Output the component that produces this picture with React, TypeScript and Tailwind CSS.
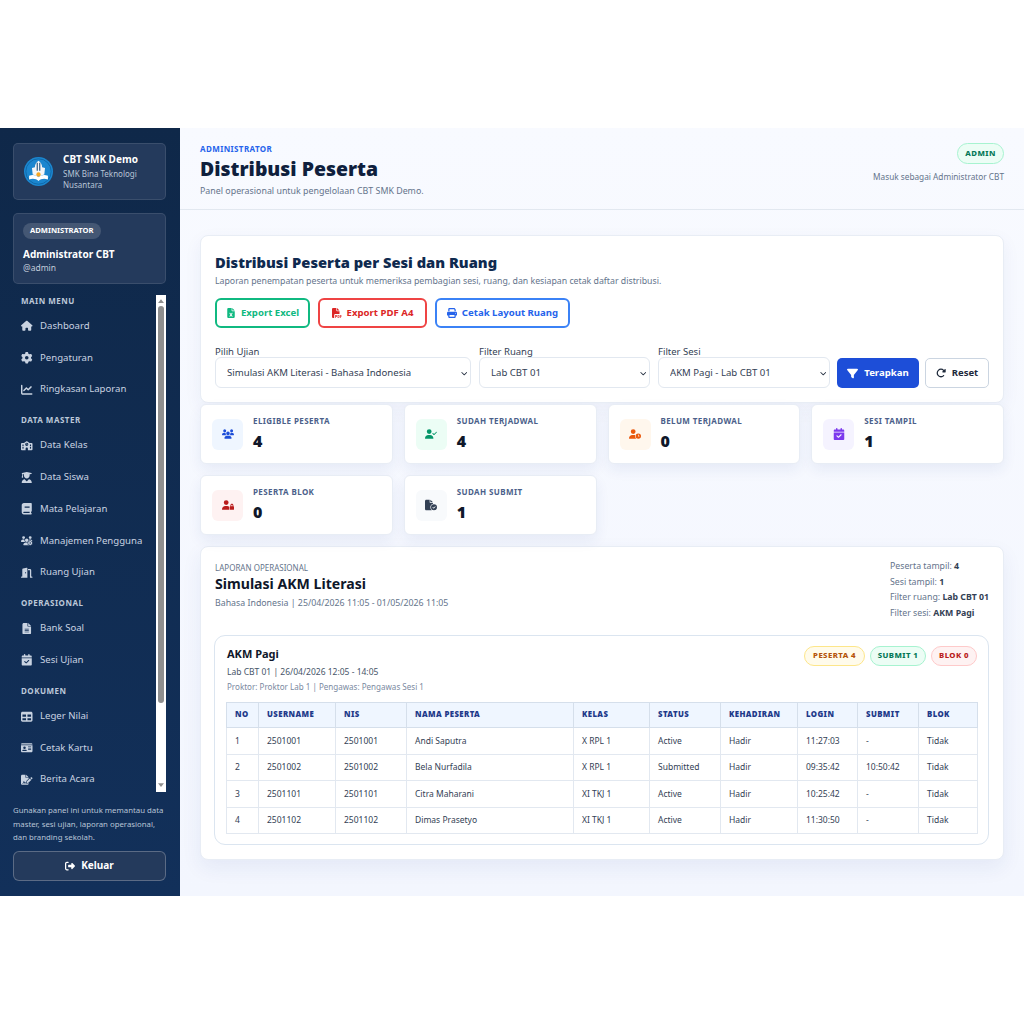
import type { ReactNode } from "react";
import {
  FaBook,
  FaCalendarCheck,
  FaChartLine,
  FaChevronDown,
  FaDoorOpen,
  FaFileCircleCheck,
  FaFileExcel,
  FaFileLines,
  FaFilePdf,
  FaFileSignature,
  FaFilter,
  FaGear,
  FaHouse,
  FaIdCard,
  FaPrint,
  FaRightFromBracket,
  FaRotateRight,
  FaSchool,
  FaTable,
  FaUserCheck,
  FaUserClock,
  FaUserGraduate,
  FaUserLock,
  FaUsers,
  FaUsersGear,
} from "react-icons/fa6";

const navGroups = [
  {
    label: "MAIN MENU",
    items: [
      { name: "Dashboard", icon: <FaHouse /> },
      { name: "Pengaturan", icon: <FaGear /> },
      { name: "Ringkasan Laporan", icon: <FaChartLine /> },
    ],
  },
  {
    label: "DATA MASTER",
    items: [
      { name: "Data Kelas", icon: <FaSchool /> },
      { name: "Data Siswa", icon: <FaUserGraduate /> },
      { name: "Mata Pelajaran", icon: <FaBook /> },
      { name: "Manajemen Pengguna", icon: <FaUsersGear /> },
      { name: "Ruang Ujian", icon: <FaDoorOpen /> },
    ],
  },
  {
    label: "OPERASIONAL",
    items: [
      { name: "Bank Soal", icon: <FaFileLines /> },
      { name: "Sesi Ujian", icon: <FaCalendarCheck /> },
    ],
  },
  {
    label: "DOKUMEN",
    items: [
      { name: "Leger Nilai", icon: <FaTable /> },
      { name: "Cetak Kartu", icon: <FaIdCard /> },
      { name: "Berita Acara", icon: <FaFileSignature /> },
    ],
  },
];

const rows = [
  ["1", "2501001", "2501001", "Andi Saputra", "X RPL 1", "Active", "Hadir", "11:27:03", "-", "Tidak"],
  ["2", "2501002", "2501002", "Bela Nurfadila", "X RPL 1", "Submitted", "Hadir", "09:35:42", "10:50:42", "Tidak"],
  ["3", "2501101", "2501101", "Citra Maharani", "XI TKJ 1", "Active", "Hadir", "10:25:42", "-", "Tidak"],
  ["4", "2501102", "2501102", "Dimas Prasetyo", "XI TKJ 1", "Active", "Hadir", "11:30:50", "-", "Tidak"],
];

const columns = [
  { name: "NO", width: "w-[32px]" },
  { name: "USERNAME", width: "w-[77px]" },
  { name: "NIS", width: "w-[71px]" },
  { name: "NAMA PESERTA", width: "w-[167px]" },
  { name: "KELAS", width: "w-[76px]" },
  { name: "STATUS", width: "w-[71px]" },
  { name: "KEHADIRAN", width: "w-[77px]" },
  { name: "LOGIN", width: "w-[60px]" },
  { name: "SUBMIT", width: "w-[61px]" },
  { name: "BLOK", width: "w-[59px]" },
];

const Logo = () => (
  <svg viewBox="0 0 40 40" className="w-[29px] h-[29px] shrink-0">
    <circle cx="20" cy="20" r="20" fill="#1b86cf" />
    <circle cx="20" cy="20" r="17.5" fill="none" stroke="#0d5f9e" strokeWidth="1" />
    <path d="M20 5c-3 2-5 5-5 9l-4 1 1 9 8 3 8-3 1-9-4-1c0-4-2-7-5-9z" fill="#f4f6f8" />
    <path d="M17.500 8h1.500v11h-1.500zM21 8h1.500v11h-1.500z" fill="#1b4f7a" />
    <path d="M7 26c5-2 10-1 13 2 3-3 8-4 13-2v5c-5-2-10-1-13 2-3-3-8-4-13-2z" fill="#ffffff" />
    <circle cx="20" cy="24" r="3" fill="#f5a623" />
  </svg>
);

const ActionButton = ({ icon, label, tone, width }: { icon: ReactNode; label: string; tone: string; width: string }) => (
  <button className={`h-[30px] flex items-center justify-center gap-[5px] rounded-[6px] border-2 bg-white text-[9.600px] font-bold ${width} ${tone}`}>
    <span className="text-[10px]">{icon}</span>
    {label}
  </button>
);

const Field = ({ label, value, width }: { label: string; value: string; width: string }) => (
  <label className={`flex flex-col shrink-0 ${width}`}>
    <span className="-mb-[1px] text-[9.500px] leading-[13px] text-[#334155]">{label}</span>
    <div className="relative">
      <select className="appearance-none h-[31px] w-full rounded-[6px] border border-[#e2e8f0] bg-white pl-[11px] pt-[1px] text-[9.600px] text-[#334155]">
        <option>{value}</option>
      </select>
      <FaChevronDown className="absolute right-[4px] top-[13px] text-[6.500px] text-[#1e293b]" />
    </div>
  </label>
);

const Stat = ({ icon, tone, label, value }: { icon: ReactNode; tone: string; label: string; value: string }) => (
  <div className="h-[60px] flex items-center gap-[10px] pl-[11px] rounded-[6px] border border-[#e8edf5] bg-white shadow-[0_6px_14px_rgba(30,58,138,0.07)]">
    <div className={`w-[31px] h-[31px] rounded-[6px] flex items-center justify-center text-[12px] ${tone}`}>{icon}</div>
    <div className="flex flex-col -mt-[1px]">
      <span className="text-[8px] leading-[11px] font-bold tracking-[0.4px] text-[#4b5f8a]">{label}</span>
      <span className="text-[16px] leading-[22px] mt-[4px] font-black text-[#0f172a]">{value}</span>
    </div>
  </div>
);

const Pill = ({ label, tone, width }: { label: string; tone: string; width: string }) => (
  <span className={`h-[20px] flex items-center justify-center rounded-full border text-[7.800px] font-extrabold tracking-[0.4px] ${width} ${tone}`}>{label}</span>
);

export default function App() {
  return (
    <div className="min-h-screen flex items-center bg-white font-['Noto_Sans',sans-serif]">
      <div className="w-[1024px] h-[768px] flex overflow-hidden">
        <aside className="w-[180px] shrink-0 flex flex-col pt-[15px] pl-[13px] pr-[14px] bg-gradient-to-b from-[#0f2849] to-[#12305a]">
          <div className="h-[57px] shrink-0 flex items-center gap-[10px] pl-[10px] rounded-[5px] border border-white/10 bg-[#243a5c]">
            <Logo />
            <div className="flex flex-col -mt-[2px]">
              <span className="text-[10px] leading-[14px] font-bold text-white">CBT SMK Demo</span>
              <span className="text-[8px] leading-[11px] mt-[2px] text-[#b8c4d6]">
                SMK Bina Teknologi
                <br />
                Nusantara
              </span>
            </div>
          </div>

          <div className="h-[71px] shrink-0 mt-[13px] flex flex-col items-start pl-[9px] pt-[9px] rounded-[5px] border border-white/10 bg-[#243a5c]">
            <span className="h-[16px] px-[7px] flex items-center rounded-full bg-white/15 text-[7.600px] font-bold text-white">ADMINISTRATOR</span>
            <span className="mt-[8px] text-[10px] leading-[14px] font-bold text-white">Administrator CBT</span>
            <span className="text-[8.500px] leading-[13px] text-[#c3cddb]">@admin</span>
          </div>

          <nav className="h-[497px] shrink-0 mt-[11px] flex overflow-hidden">
            <div className="flex-1 pl-[8px]">
              {navGroups.map((group, i) => (
                <div key={group.label} className={i === 0 ? "" : "mt-[9px]"}>
                  <div className="h-[12px] mb-[3.400px] flex items-center text-[8px] font-bold tracking-[0.5px] text-[#bcc8d9]">{group.label}</div>
                  {group.items.map((item) => (
                    <div key={item.name} className="h-[31.700px] flex items-center text-[#c9d3e1]">
                      <span className="w-[19px] shrink-0 flex text-[11.500px]">{item.icon}</span>
                      <span className="text-[9.600px] whitespace-nowrap">{item.name}</span>
                    </div>
                  ))}
                </div>
              ))}
            </div>
            <div className="w-[10px] shrink-0 flex flex-col items-center bg-white">
              <svg viewBox="0 0 8 5" className="w-[6px] h-[4px] mt-[4px] fill-[#8f8f8f]">
                <polygon points="4,0 8,5 0,5" />
              </svg>
              <div className="w-[6px] h-[397px] mt-[3px] rounded-full bg-[#8f8f8f]" />
              <svg viewBox="0 0 8 5" className="w-[6px] h-[4px] mt-[80px] fill-[#8f8f8f]">
                <polygon points="0,0 8,0 4,5" />
              </svg>
            </div>
          </nav>

          <p className="mt-[12px] text-[7.800px] leading-[13.500px] text-[#b8c4d6]">
            Gunakan panel ini untuk memantau data master, sesi ujian, laporan operasional, dan branding sekolah.
          </p>
          <button className="h-[30px] mt-[6px] shrink-0 flex items-center justify-center gap-[6px] rounded-[6px] border border-white/25 bg-[#243a5c] text-[10px] font-bold text-white">
            <FaRightFromBracket className="text-[10px]" />
            Keluar
          </button>
        </aside>

        <main className="flex-1 min-w-0 flex flex-col bg-gradient-to-b from-[#f8faff] to-[#f3f6fe] text-[#0f172a]">
          <header className="h-[82px] shrink-0 flex justify-between px-[20px] pt-[15px] border-b border-[#e2e8f0]">
            <div className="flex flex-col">
              <span className="text-[8px] leading-[11px] font-bold tracking-[0.4px] text-[#2563eb]">ADMINISTRATOR</span>
              <h1 className="mt-[2px] text-[19.400px] leading-[26px] font-black text-[#0f1f3d]">Distribusi Peserta</h1>
              <span className="mt-[3px] text-[8.850px] leading-[13px] text-[#64748b]">Panel operasional untuk pengelolaan CBT SMK Demo.</span>
            </div>
            <div className="flex flex-col items-end">
              <span className="h-[21px] px-[7px] flex items-center rounded-full border border-[#a7f3d0] bg-[#ecfdf5] text-[7.800px] font-extrabold tracking-[0.5px] text-[#047857]">ADMIN</span>
              <span className="mt-[7px] text-[8.250px] leading-[12px] text-[#64748b]">Masuk sebagai Administrator CBT</span>
            </div>
          </header>

          <div className="flex-1 px-[20px] pt-[25px]">
            <section className="h-[168px] px-[14px] pt-[15px] rounded-[8px] border border-[#e8edf5] bg-white shadow-[0_6px_18px_rgba(30,58,138,0.06)]">
              <h2 className="text-[14.700px] leading-[22px] font-black text-[#0f2a4f]">Distribusi Peserta per Sesi dan Ruang</h2>
              <p className="mt-[2px] text-[8.750px] leading-[13px] text-[#64748b]">
                Laporan penempatan peserta untuk memeriksa pembagian sesi, ruang, dan kesiapan cetak daftar distribusi.
              </p>
              <div className="flex gap-[8px] mt-[10px]">
                <ActionButton icon={<FaFileExcel />} label="Export Excel" width="w-[95px]" tone="border-[#10b981] text-[#10b981]" />
                <ActionButton icon={<FaFilePdf />} label="Export PDF A4" width="w-[109px]" tone="border-[#ef4444] text-[#dc2626]" />
                <ActionButton icon={<FaPrint />} label="Cetak Layout Ruang" width="w-[135px]" tone="border-[#3b82f6] text-[#2563eb]" />
              </div>
              <div className="flex items-end mt-[17px]">
                <Field label="Pilih Ujian" value="Simulasi AKM Literasi - Bahasa Indonesia" width="w-[256px]" />
                <div className="w-[8px]" />
                <Field label="Filter Ruang" value="Lab CBT 01" width="w-[171px]" />
                <div className="w-[8px]" />
                <Field label="Filter Sesi" value="AKM Pagi - Lab CBT 01" width="w-[172px]" />
                <button className="ml-[7px] h-[30px] w-[82px] flex items-center justify-center gap-[6px] rounded-[5px] bg-[#1d4ed8] text-[9.600px] font-bold text-white">
                  <FaFilter className="text-[11px]" />
                  Terapkan
                </button>
                <button className="ml-[6px] h-[30px] w-[64px] flex items-center justify-center gap-[6px] rounded-[5px] border border-[#cbd5e1] bg-white text-[9.500px] font-bold text-[#1e293b]">
                  <FaRotateRight className="text-[10px]" />
                  Reset
                </button>
              </div>
            </section>

            <div className="grid grid-cols-4 gap-x-[11px] gap-y-[11px] mt-[1px]">
              <Stat icon={<FaUsers />} tone="bg-[#eff6ff] text-[#1d4ed8]" label="ELIGIBLE PESERTA" value="4" />
              <Stat icon={<FaUserCheck />} tone="bg-[#ecfdf5] text-[#059669]" label="SUDAH TERJADWAL" value="4" />
              <Stat icon={<FaUserClock />} tone="bg-[#fff7ed] text-[#ea580c]" label="BELUM TERJADWAL" value="0" />
              <Stat icon={<FaCalendarCheck />} tone="bg-[#f5f3ff] text-[#7c3aed]" label="SESI TAMPIL" value="1" />
              <Stat icon={<FaUserLock />} tone="bg-[#fef2f2] text-[#b91c1c]" label="PESERTA BLOK" value="0" />
              <Stat icon={<FaFileCircleCheck />} tone="bg-[#f8fafc] text-[#334155]" label="SUDAH SUBMIT" value="1" />
            </div>

            <section className="h-[314px] mt-[11px] pl-[13px] pr-[14px] pt-[15px] rounded-[8px] border border-[#e8edf5] bg-white shadow-[0_8px_20px_rgba(30,58,138,0.07)]">
              <div className="h-[73px] pl-[1px] flex justify-between">
                <div className="flex flex-col">
                  <span className="text-[8px] leading-[12px] text-[#64748b]">LAPORAN OPERASIONAL</span>
                  <span className="text-[14.100px] leading-[19px] font-bold text-[#0f172a]">Simulasi AKM Literasi</span>
                  <span className="mt-[4px] text-[8.800px] leading-[13px] text-[#64748b]">Bahasa Indonesia | 25/04/2026 11:05 - 01/05/2026 11:05</span>
                </div>
                <div className="w-[99px] -mt-[3px] flex flex-col text-[8.750px] leading-[15.500px] text-[#64748b] whitespace-nowrap">
                  <span>Peserta tampil: <b className="text-[#334155]">4</b></span>
                  <span>Sesi tampil: <b className="text-[#334155]">1</b></span>
                  <span>Filter ruang: <b className="text-[#334155]">Lab CBT 01</b></span>
                  <span>Filter sesi: <b className="text-[#334155]">AKM Pagi</b></span>
                </div>
              </div>

              <div className="h-[210px] pl-[12px] pr-[11px] pt-[10px] rounded-[11px] border border-[#dbe5f0]">
                <div className="h-[56px] flex justify-between">
                  <div className="flex flex-col -mt-[1px]">
                    <span className="text-[11px] leading-[17px] font-bold text-[#0f172a]">AKM Pagi</span>
                    <span className="mt-[2px] text-[8.500px] leading-[15px] text-[#475569]">Lab CBT 01 | 26/04/2026 12:05 - 14:05</span>
                    <span className="text-[8.050px] leading-[16px] text-[#7b8a9f]">Proktor: Proktor Lab 1 | Pengawas: Pengawas Sesi 1</span>
                  </div>
                  <div className="flex gap-[5px] h-[20px]">
                    <Pill label="PESERTA 4" width="w-[61px]" tone="border-[#fde68a] bg-[#fffbeb] text-[#b45309]" />
                    <Pill label="SUBMIT 1" width="w-[56px]" tone="border-[#a7f3d0] bg-[#ecfdf5] text-[#047857]" />
                    <Pill label="BLOK 0" width="w-[46px]" tone="border-[#fecaca] bg-[#fef2f2] text-[#b91c1c]" />
                  </div>
                </div>

                <table className="w-[751px] -ml-[1px] table-fixed border-collapse">
                  <thead>
                    <tr className="h-[25px] bg-[#eff6ff]">
                      {columns.map((col) => (
                        <th key={col.name} className={`${col.width} border border-[#d5dfeb] pl-[8px] text-left text-[7.800px] font-black tracking-[0.4px] text-[#1e3a8a]`}>
                          {col.name}
                        </th>
                      ))}
                    </tr>
                  </thead>
                  <tbody>
                    {rows.map((row) => (
                      <tr key={row[0]} className="h-[26.500px]">
                        {row.map((cell, i) => (
                          <td key={i} className="border border-[#e2e8f0] pl-[8px] pt-[1px] text-[8.500px] text-[#334155] whitespace-nowrap">
                            {cell}
                          </td>
                        ))}
                      </tr>
                    ))}
                  </tbody>
                </table>
              </div>
            </section>
          </div>
        </main>
      </div>
    </div>
  );
}
